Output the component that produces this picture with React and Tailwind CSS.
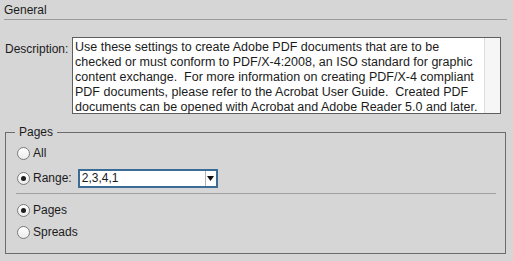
import React from "react";

const description =
  "Use these settings to create Adobe PDF documents that are to be\nchecked or must conform to PDF/X-4:2008, an ISO standard for graphic\ncontent exchange.  For more information on creating PDF/X-4 compliant\nPDF documents, please refer to the Acrobat User Guide.  Created PDF\ndocuments can be opened with Acrobat and Adobe Reader 5.0 and later.";

function Radio({ checked, label, children }) {
  return (
    <div className="flex items-center h-[20px]">
      <div className="w-[13px] h-[13px] rounded-full border border-[#7b7b7b] bg-gradient-to-b from-white to-[#ececec] flex items-center justify-center">
        {checked && <div className="w-[5px] h-[5px] rounded-full bg-[#1e1e1e]" />}
      </div>
      <span className="ml-[3px]">{label}</span>
      {children}
    </div>
  );
}

export default function App() {
  return (
    <div
      className="w-[513px] h-[261px] bg-[#d6d6d6] text-[#1b1b1b] text-[12px] leading-[14px] overflow-hidden"
      style={{ fontFamily: '"Liberation Sans", Arial, sans-serif' }}
    >
      <div className="pt-[3px] pl-[4px]">General</div>
      <div className="ml-[4px] mt-[2px] w-[503px] h-px bg-[#9c9c9c]" />

      <div className="flex items-start mt-[17px]">
        <div className="w-[72px] pl-[5px] pt-[5px]">Description:</div>
        <div className="w-[429px] h-[77px] border border-[#5f5f5f] bg-white flex">
          <div className="flex-1 pl-[2px] pt-[2px] text-[12.5px] leading-[15px] whitespace-pre">
            {description}
          </div>
          <div className="w-[16px] border-l border-[#dcdcdc] bg-[#f6f6f6]" />
        </div>
      </div>

      <fieldset className="ml-[5px] mt-[11px] w-[501px] border border-[#6c6c6c] pb-[11px]">
        <legend className="ml-[9px] px-[4px]">Pages</legend>
        <div className="pl-[11px] pt-[4px]">
          <Radio label="All" />
          <div className="mt-[5px]">
            <Radio checked label="Range:">
              <div className="ml-[6px] w-[140px] h-[19px] border-2 border-[#3b6b97] bg-white flex">
                <div className="flex-1 pl-[2px] leading-[15px]">2,3,4,1</div>
                <div className="w-[11px] border-l border-[#b4b4b4] flex items-center justify-center">
                  <svg width="7" height="5" viewBox="0 0 7 5">
                    <path d="M0 0h7L3.5 5z" fill="#111" />
                  </svg>
                </div>
              </div>
            </Radio>
          </div>
        </div>
        <div className="ml-[10px] mr-[9px] mt-[5px] h-px bg-[#a0a0a0]" />
        <div className="pl-[11px] mt-[6px]">
          <Radio checked label="Pages" />
          <div className="mt-[2px]">
            <Radio label="Spreads" />
          </div>
        </div>
      </fieldset>
    </div>
  );
}
